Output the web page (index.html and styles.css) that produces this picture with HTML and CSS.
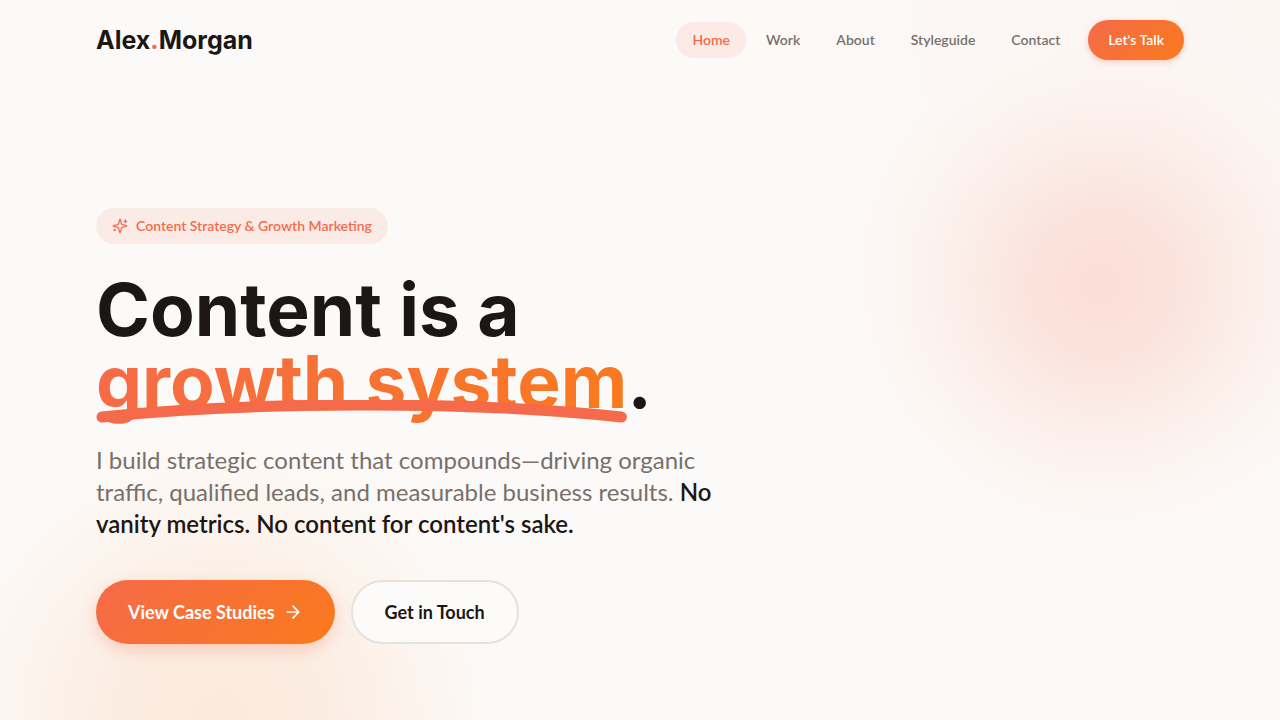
FILE: index.html
```html
<!DOCTYPE html>
<html lang="en">
<head>
    <meta charset="UTF-8">
    <meta name="viewport" content="width=device-width, initial-scale=1">
    <title>Alex.Morgan</title>
    <link rel="stylesheet" href="styles.css">
</head>
<body>
    <header class="header">
        <a href="#" class="logo">Alex<span class="dot">.</span>Morgan</a>
        <nav class="nav">
            <a href="#" class="nav-link active">Home</a>
            <a href="#work" class="nav-link">Work</a>
            <a href="#about" class="nav-link">About</a>
            <a href="#styleguide" class="nav-link">Styleguide</a>
            <a href="#contact" class="nav-link">Contact</a>
            <a href="#contact" class="nav-cta">Let's Talk</a>
        </nav>
    </header>
    <main class="hero">
        <div class="badge">
            <svg class="badge-icon" viewBox="0 0 24 24" fill="none" stroke="currentColor" stroke-width="2" stroke-linecap="round" stroke-linejoin="round" aria-hidden="true">
                <path d="M9.937 15.5A2 2 0 0 0 8.5 14.063l-6.135-1.582a.5.5 0 0 1 0-.962L8.5 9.936A2 2 0 0 0 9.937 8.5l1.582-6.135a.5.5 0 0 1 .963 0L14.063 8.5A2 2 0 0 0 15.5 9.937l6.135 1.581a.5.5 0 0 1 0 .964L15.5 14.063a2 2 0 0 0-1.437 1.437l-1.582 6.135a.5.5 0 0 1-.963 0z"/>
                <path d="M20 3v4M22 5h-4M4 17v2M5 18H3"/>
            </svg>
            <span>Content Strategy &amp; Growth Marketing</span>
        </div>
        <h1 class="title">Content is a<br><span class="highlight"><span class="highlight-text">growth system</span><svg class="underline" viewBox="0 0 532 24" preserveAspectRatio="none" fill="none" aria-hidden="true"><path d="M6 17C150 2 370 0 526 17" stroke="#f56a4a" stroke-width="11" stroke-linecap="round"/></svg></span>.</h1>
        <p class="lead">I build strategic content that compounds—driving organic traffic, qualified leads, and measurable business results. <strong>No vanity metrics. No content for content's sake.</strong></p>
        <div class="actions">
            <a href="#work" class="btn btn-primary">View Case Studies
                <svg class="arrow" viewBox="0 0 24 24" fill="none" stroke="currentColor" stroke-width="2" stroke-linecap="round" stroke-linejoin="round" aria-hidden="true">
                    <path d="M5 12h14M12 5l7 7-7 7"/>
                </svg>
            </a>
            <a href="#contact" class="btn btn-outline">Get in Touch</a>
        </div>
    </main>
</body>
</html>
```
FILE: styles.css
```css
* {
    box-sizing: border-box;
}
body {
    margin: 0;
    min-height: 100vh;
    font-family: Lato, "Liberation Sans", sans-serif;
    color: #1c1714;
    /* coral glow on the right, orange glow at the bottom left */
    background:
        radial-gradient(circle 250px at 86% 286px, rgba(245, 106, 74, 0.18), rgba(245, 106, 74, 0.14) 30%, rgba(245, 106, 74, 0.07) 58%, rgba(245, 106, 74, 0.02) 82%, transparent),
        radial-gradient(circle 290px at 220px 720px, rgba(249, 115, 22, 0.12), rgba(249, 115, 22, 0.1) 35%, rgba(249, 115, 22, 0.05) 65%, rgba(249, 115, 22, 0.01) 90%, transparent),
        radial-gradient(circle 700px at 100% 0, rgba(245, 106, 74, 0.03), transparent),
        #fcfaf8;
}
a {
    text-decoration: none;
    color: inherit;
}
.header {
    display: flex;
    align-items: center;
    justify-content: space-between;
    height: 80px;
    padding: 0 96px;
}
.logo {
    font-family: Inter, sans-serif;
    font-size: 25px;
    font-weight: 700;
}
.dot {
    color: #f56a4a;
}
.nav {
    display: flex;
    align-items: center;
    gap: 4px;
    font-size: 14px;
    font-weight: 600;
    line-height: 20px;
}
.nav-link {
    padding: 8px 16px;
    border-radius: 18px;
    color: #78706b;
}
.nav-link.active {
    color: #f56a4a;
    background: rgba(245, 106, 74, 0.1);
}
.nav-cta {
    margin-left: 8px;
    padding: 10px 20px;
    border-radius: 20px;
    color: #fff;
    background: linear-gradient(135deg, #f56a4a, #fa7a1c);
    box-shadow: 0 2px 6px rgba(245, 106, 74, 0.3);
}
.hero {
    padding: 128px 96px 76px;
}
.badge {
    display: inline-flex;
    align-items: center;
    gap: 8px;
    padding: 8px 16px;
    border-radius: 18px;
    color: #f56a4a;
    background: rgba(245, 106, 74, 0.1);
    font-size: 14px;
    font-weight: 600;
    line-height: 20px;
}
.badge-icon {
    width: 16px;
    height: 16px;
}
.title {
    margin: 30px 0 26px;
    font-family: Inter, sans-serif;
    font-size: 73px;
    font-weight: 700;
    line-height: 72px;
}
.highlight {
    position: relative;
    display: inline-block;
}
.highlight-text {
    display: block;
    margin-bottom: -8px;
    padding-bottom: 8px;
    color: transparent;
    background: linear-gradient(135deg, #f56a4a, #fa7a1c);
    -webkit-background-clip: text;
    background-clip: text;
}
.underline {
    position: absolute;
    left: 0;
    bottom: -6px;
    width: 100%;
    height: 24px;
}
.lead {
    max-width: 672px;
    margin: 0 0 40px;
    font-size: 24px;
    line-height: 32px;
    color: #78706b;
}
.lead strong {
    font-weight: 600;
    color: #1c1714;
}
.actions {
    display: flex;
    gap: 16px;
}
.btn {
    display: flex;
    align-items: center;
    gap: 8px;
    height: 64px;
    padding: 0 32px;
    border-radius: 32px;
    font-size: 18px;
    font-weight: 700;
}
.btn-primary {
    color: #fff;
    background: linear-gradient(135deg, #f56a4a, #fa7a1c);
    box-shadow: 0 6px 16px rgba(245, 106, 74, 0.25);
}
.btn-outline {
    border: 2px solid #e5e2de;
    background: #fcfbf9;
}
.arrow {
    width: 20px;
    height: 20px;
}
```
